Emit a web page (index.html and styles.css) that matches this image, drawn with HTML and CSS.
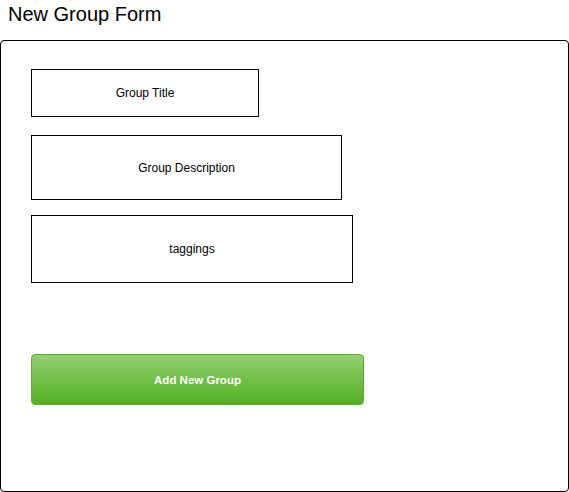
FILE: index.html
```html
<!DOCTYPE html>
<html>
<head>
<meta charset="utf-8">
<link rel="stylesheet" href="styles.css">
</head>
<body>
<h1 class="page-title">New Group Form</h1>
<div class="form-box">
  <div class="field field-title">Group Title</div>
  <div class="field field-desc">Group Description</div>
  <div class="field field-tags">taggings</div>
  <div class="submit-btn">Add New Group</div>
</div>
</body>
</html>
```
FILE: styles.css
```css
html, body {
  margin: 0;
  padding: 0;
  background: #fff;
  font-family: "Liberation Sans", Arial, Helvetica, sans-serif;
  color: #000;
}
.page-title {
  margin: 0;
  padding: 3px 0 0 8px;
  height: 40px;
  box-sizing: border-box;
  font-size: 20px;
  font-weight: normal;
  line-height: 22px;
}
.form-box {
  width: 569px;
  height: 452px;
  box-sizing: border-box;
  border: 1px solid #000;
  border-radius: 4px;
  padding: 28px 0 0 30px;
  display: flex;
  flex-direction: column;
  align-items: flex-start;
}
.field {
  box-sizing: border-box;
  border: 1px solid #000;
  display: flex;
  align-items: center;
  justify-content: center;
  font-size: 12px;
}
.field-title {
  width: 228px;
  height: 48px;
}
.field-desc {
  width: 311px;
  height: 65px;
  margin-top: 18px;
}
.field-tags {
  width: 322px;
  height: 68px;
  margin-top: 15px;
}
.submit-btn {
  box-sizing: border-box;
  width: 333px;
  height: 51px;
  margin-top: 71px;
  border: 1px solid #5cb030;
  border-radius: 4px;
  background: linear-gradient(to bottom, #93d06f 0%, #72c04a 50%, #54b023 100%);
  color: #fff;
  font-size: 11.5px;
  font-weight: bold;
  display: flex;
  align-items: center;
  justify-content: center;
}
```
